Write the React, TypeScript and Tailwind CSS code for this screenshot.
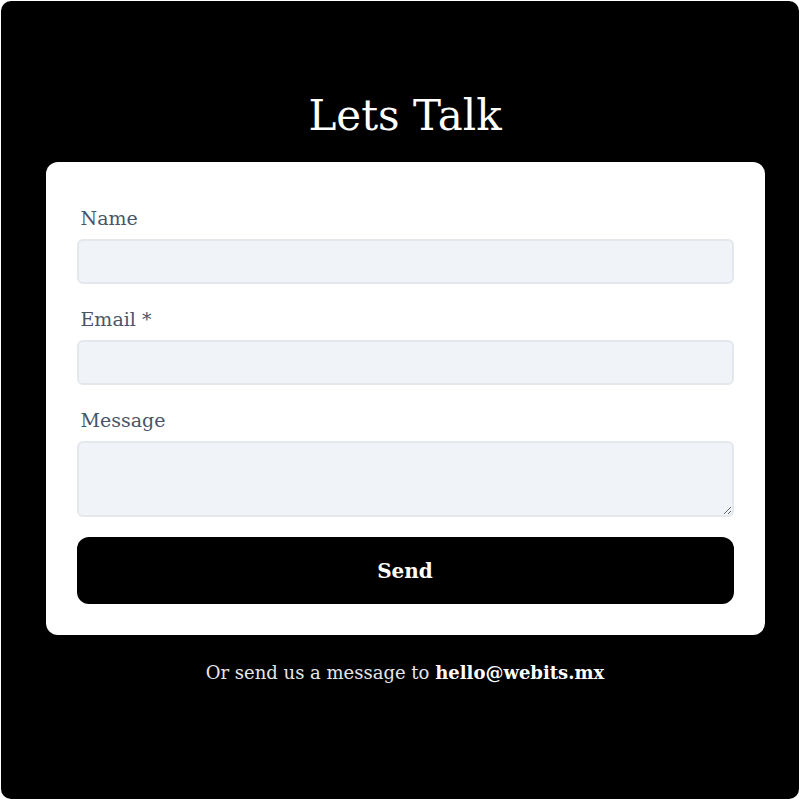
import React from "react";

export default function App() {
  return (
    <div className="w-[800px] h-[800px] bg-white p-px" style={{ fontFamily: '"DejaVu Serif", serif' }}>
      <div className="w-full h-full bg-black rounded-[10px] flex flex-col items-center pt-[87px] pl-[10px]">
        <h1 className="text-white text-[42px] leading-[56px] mb-[18px]">Lets Talk</h1>
        <div className="w-[719px] bg-white rounded-[12px] px-[31px] pt-[44px] pb-[31px] flex flex-col">
          <label className="text-[19px] leading-[24px] text-[#475569] px-1 mb-[9px]">Name</label>
          <div className="h-[45px] bg-[#f0f3f8] border-2 border-[#e4e7ec] rounded-[6px] mb-[23px]"></div>
          <label className="text-[19px] leading-[24px] text-[#475569] px-1 mb-[9px]">Email *</label>
          <div className="h-[45px] bg-[#f0f3f8] border-2 border-[#e4e7ec] rounded-[6px] mb-[23px]"></div>
          <label className="text-[19px] leading-[24px] text-[#475569] px-1 mb-[9px]">Message</label>
          <textarea className="h-[76px] bg-[#f0f3f8] border-2 border-[#e4e7ec] rounded-[6px] mb-[20px]"></textarea>
          <button className="h-[67px] bg-black rounded-[12px] text-white text-[20px] font-bold">Send</button>
        </div>
        <p className="mt-[24px] text-[18px] text-[#e5e7eb]">
          Or send us a message to <span className="font-bold text-white">hello@webits.mx</span>
        </p>
      </div>
    </div>
  );
}
